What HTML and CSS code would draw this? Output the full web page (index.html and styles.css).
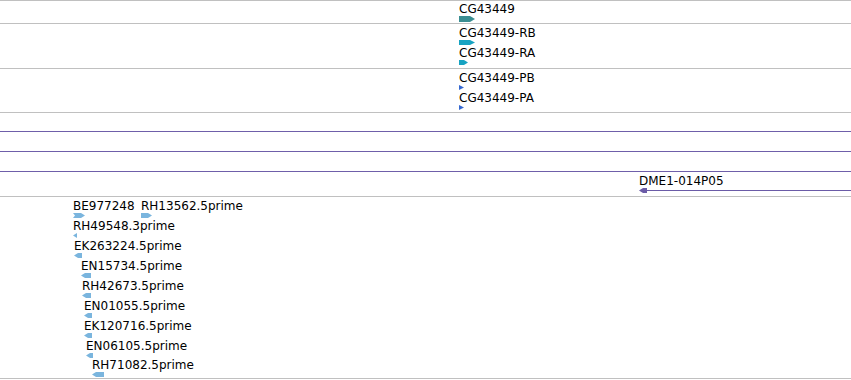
FILE: index.html
```html
<!DOCTYPE html>
<html lang="en">
<head>
  <meta charset="UTF-8">
  <title>Tracks</title>
  <link rel="stylesheet" href="styles.css">
</head>
<body>
  <div class="browser">
    <!-- gene -->
    <div class="track t-gene">
      <div class="feat" style="left:459px;top:2px">
        <div class="label">CG43449</div>
        <svg class="glyph" width="17" height="6"><polygon class="c-gene" points="0,0 11,0 16,3 11,6 0,6"/></svg>
      </div>
    </div>

    <!-- transcripts -->
    <div class="track t-mrna">
      <div class="feat" style="left:459px;top:3px">
        <div class="label">CG43449-RB</div>
        <svg class="glyph" width="17" height="5"><polygon class="c-mrna" points="0,0 11,0 16,2.5 11,5 0,5"/></svg>
      </div>
      <div class="feat" style="left:459px;top:23px">
        <div class="label">CG43449-RA</div>
        <svg class="glyph" width="10" height="5"><polygon class="c-mrna" points="0,0 5,0 9,2.5 5,5 0,5"/></svg>
      </div>
    </div>

    <!-- polypeptides -->
    <div class="track t-prot">
      <div class="feat" style="left:459px;top:3px">
        <div class="label">CG43449-PB</div>
        <svg class="glyph" width="6" height="5"><polygon class="c-prot" points="0,0 5,2.5 0,5"/></svg>
      </div>
      <div class="feat" style="left:459px;top:23px">
        <div class="label">CG43449-PA</div>
        <svg class="glyph" width="6" height="5"><polygon class="c-prot" points="0,0 5,2.5 0,5"/></svg>
      </div>
    </div>

    <!-- BAC clones -->
    <div class="track t-clone">
      <div class="span-line" style="top:18px"></div>
      <div class="span-line" style="top:38px"></div>
      <div class="span-line" style="top:58px"></div>
      <div class="feat" style="left:639px;top:62px;right:0">
        <div class="label">DME1-014P05</div>
        <div class="clone-glyph">
          <svg width="8" height="5"><polygon class="c-clone" points="0,2.5 4,0 8,0 8,5 4,5"/></svg>
          <div class="clone-line"></div>
        </div>
      </div>
    </div>

    <!-- ESTs -->
    <div class="track t-est">
      <div class="feat" style="left:73px;top:3px">
        <div class="label">BE977248</div>
        <svg class="glyph" width="13" height="5"><polygon class="c-est" points="0,0 8,0 12,2.5 8,5 0,5 2,2.5"/></svg>
      </div>
      <div class="feat" style="left:141px;top:3px">
        <div class="label">RH13562.5prime</div>
        <svg class="glyph" width="12" height="5"><polygon class="c-est" points="0,0 7,0 11,2.5 7,5 0,5"/></svg>
      </div>
      <div class="feat" style="left:73px;top:23px">
        <div class="label">RH49548.3prime</div>
        <svg class="glyph" width="5" height="5"><polygon class="c-est" points="0,2.5 4,0 4,5"/></svg>
      </div>
      <div class="feat" style="left:74px;top:43px">
        <div class="label">EK263224.5prime</div>
        <svg class="glyph" width="9" height="5"><polygon class="c-est" points="0,2.5 4,0 8,0 8,5 4,5"/></svg>
      </div>
      <div class="feat" style="left:81px;top:63px">
        <div class="label">EN15734.5prime</div>
        <svg class="glyph" width="11" height="5"><polygon class="c-est" points="0,2.5 4,0 10,0 10,5 4,5"/></svg>
      </div>
      <div class="feat" style="left:82px;top:83px">
        <div class="label">RH42673.5prime</div>
        <svg class="glyph" width="10" height="5"><polygon class="c-est" points="0,2.5 4,0 9,0 9,5 4,5"/></svg>
      </div>
      <div class="feat" style="left:84px;top:103px">
        <div class="label">EN01055.5prime</div>
        <svg class="glyph" width="9" height="5"><polygon class="c-est" points="0,2.5 4,0 8,0 8,5 4,5"/></svg>
      </div>
      <div class="feat" style="left:84px;top:123px">
        <div class="label">EK120716.5prime</div>
        <svg class="glyph" width="9" height="5"><polygon class="c-est" points="0,2.5 4,0 8,0 8,5 4,5"/></svg>
      </div>
      <div class="feat" style="left:86px;top:143px">
        <div class="label">EN06105.5prime</div>
        <svg class="glyph" width="8" height="5"><polygon class="c-est" points="0,2.5 4,0 7,0 7,5 4,5"/></svg>
      </div>
      <div class="feat" style="left:92px;top:162px">
        <div class="label">RH71082.5prime</div>
        <svg class="glyph" width="13" height="5"><polygon class="c-est" points="0,2.5 4,0 12,0 12,5 4,5"/></svg>
      </div>
    </div>
  </div>
</body>
</html>
```

FILE: styles.css
```css
body { margin: 0; background: #fff; font-family: "DejaVu Sans", sans-serif; }
.browser { border-top: 1px solid #c0c0c0; }
.track { position: relative; border-bottom: 1px solid #c0c0c0; overflow: hidden; }
.t-gene { height: 22px; }
.t-mrna { height: 44px; }
.t-prot { height: 43px; }
.t-clone { height: 83px; }
.t-est { height: 181px; }
.feat { position: absolute; display: flex; flex-direction: column; }
.label { font-size: 12px; line-height: 12px; color: #000; white-space: nowrap; }
.glyph { display: block; margin-top: 1px; }
.c-gene { fill: #3a8e92; }
.c-mrna { fill: #17a3c2; }
.c-prot { fill: #3568d0; }
.c-clone { fill: #6b5ba7; }
.c-est { fill: #7ab5de; }
.span-line { position: absolute; left: 0; right: 0; height: 1px; background: #6f5faa; }
.clone-glyph { display: flex; align-items: center; margin-top: 1px; height: 5px; }
.clone-glyph svg { display: block; flex: none; }
.clone-line { flex: 1; height: 1px; background: #6b5ba7; }
```
